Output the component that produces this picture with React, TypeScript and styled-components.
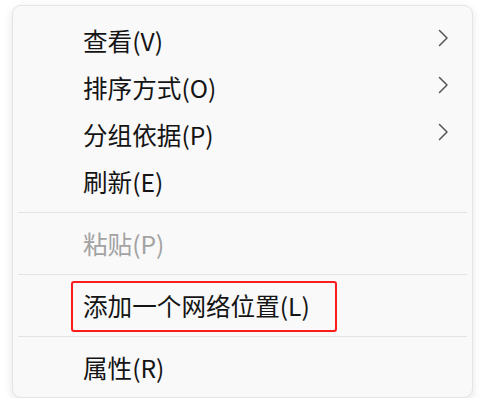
import styled, { createGlobalStyle } from 'styled-components';

interface MenuEntry {
  label: string;
  submenu?: boolean;
  disabled?: boolean;
  marked?: boolean;
}

const groups: MenuEntry[][] = [
  [
    { label: '查看(V)', submenu: true },
    { label: '排序方式(O)', submenu: true },
    { label: '分组依据(P)', submenu: true },
    { label: '刷新(E)' },
  ],
  [{ label: '粘贴(P)', disabled: true }],
  [{ label: '添加一个网络位置(L)', marked: true }],
  [{ label: '属性(R)' }],
];

const Chevron = () => (
  <svg width="12" height="20" viewBox="0 0 12 20" fill="none">
    <path d="M2.5 2.5 L10 10 L2.5 17.5" stroke="#555555" strokeWidth="1.5" strokeLinecap="round" strokeLinejoin="round" />
  </svg>
);

const App = () => {
  return (
    <Page>
      <GlobalStyle />
      <Menu>
        {groups.map((group, gi) => (
          <Group key={gi}>
            {gi > 0 && <Separator />}
            {group.map((item) => (
              <Row key={item.label} $disabled={item.disabled}>
                <Label $marked={item.marked}>{item.label}</Label>
                {item.submenu && (
                  <Arrow>
                    <Chevron />
                  </Arrow>
                )}
              </Row>
            ))}
          </Group>
        ))}
      </Menu>
    </Page>
  );
};

const GlobalStyle = createGlobalStyle`
  body {
    margin: 0;
    background: #ffffff;
    font-family: 'Noto Sans CJK SC', 'Noto Sans', sans-serif;
  }
`;

const Page = styled.div`
  padding: 5px 0 0 12px;
`;

const Menu = styled.div`
  width: 461px;
  box-sizing: border-box;
  padding: 11px 4px 6px;
  background: #f9f9f9;
  border: 1px solid #e4e4e4;
  border-radius: 9px;
  box-shadow: 0 3px 10px rgba(0, 0, 0, 0.1);
`;

const Group = styled.div`
  display: flex;
  flex-direction: column;
`;

const Separator = styled.div`
  height: 1px;
  margin: 7px 1px;
  background: #e3e3e3;
`;

const Row = styled.div<{ $disabled?: boolean }>`
  height: 47px;
  display: flex;
  align-items: center;
  justify-content: space-between;
  padding: 0 19px 0 66px;
  font-size: 24.6px;
  color: ${(props) => (props.$disabled ? '#a3a3a3' : '#141414')};
`;

const Label = styled.span<{ $marked?: boolean }>`
  position: relative;
  line-height: 1;
  white-space: nowrap;

  &::after {
    content: '';
    display: ${(props) => (props.$marked ? 'block' : 'none')};
    position: absolute;
    left: -12px;
    right: -27px;
    top: -12px;
    bottom: -14px;
    border: 2.5px solid #fb1c1c;
    border-radius: 3px;
  }
`;

const Arrow = styled.span`
  display: flex;
  margin-top: -6px;
`;

export default App;
